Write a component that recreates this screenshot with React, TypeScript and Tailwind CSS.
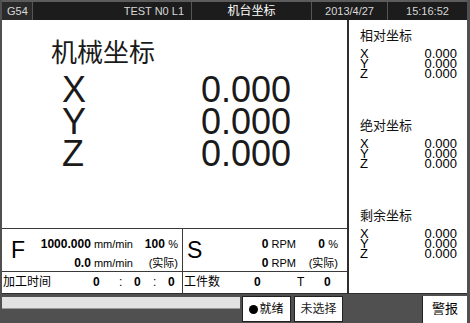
import React from 'react'

const latin = "font-['Liberation_Sans','Noto_Sans_CJK_SC',sans-serif]"

const axes = ['X', 'Y', 'Z']

function SideBlock({ title }: { title: string }) {
  return (
    <div className="h-[90px]">
      <div className="text-[13px] leading-[16px] text-[#111]">{title}</div>
      <div className="mt-[5px] text-[13px] leading-[10px] text-black">
        {axes.map((a) => (
          <div key={a} className="h-[10px] flex justify-between">
            <span>{a}</span>
            <span>0.000</span>
          </div>
        ))}
      </div>
    </div>
  )
}

export default function App() {
  return (
    <div className={`w-[470px] h-[323px] bg-[#505050] flex flex-col overflow-hidden pl-[2px] pr-[3px] ${latin}`}>
      {/* Top bar */}
      <div className="h-[20px] flex bg-[#1c1c1c] border-t-2 border-[#5c5c5c] text-[11px] leading-[18px] text-[#d8d8d8]">
        <div className="w-[31px] bg-[#2a2a2a] pl-[5px] border-r border-[#555]">G54</div>
        <div className="w-[159px] text-right pr-[7px] border-r border-[#555]">TEST N0 L1</div>
        <div className="w-[120px] text-center text-[12px] text-white border-r border-[#555]">机台坐标</div>
        <div className="w-[76px] text-center border-r border-[#555]">2013/4/27</div>
        <div className="flex-1 text-center">15:16:52</div>
      </div>

      {/* Main */}
      <div className="h-[273px] flex">
        <div className="w-[345px] flex flex-col">
          <div className="h-[209px] bg-white border-b border-[#3a3a3a] pt-[18px] pl-[49px]">
            <div className="text-[26px] leading-[30px] text-[#1a1a1a]">机械坐标</div>
            <div className="mt-[6px] ml-[11px] w-[229px] text-[36px] leading-[32px] text-[#1a1a1a]">
              {axes.map((a) => (
                <div key={a} className="flex justify-between">
                  <span>{a}</span>
                  <span>0.000</span>
                </div>
              ))}
            </div>
          </div>

          <div className="h-[43px] flex bg-white border-b border-[#3a3a3a]">
            <div className="w-[181px] flex border-r border-[#3a3a3a]">
              <div className="w-[36px] pl-[9px] pt-[8px] text-[23px] leading-[26px]">F</div>
              <div className="flex-1 grid grid-cols-[95px_45px] pt-[6px] text-[12px] leading-[19px] text-right">
                <div className="font-bold">1000.000<span className="font-normal text-[11px]"> mm/min</span></div>
                <div className="font-bold">100 <span className="font-normal text-[11px]">%</span></div>
                <div className="font-bold">0.0<span className="font-normal text-[11px]"> mm/min</span></div>
                <div className="text-[11px]">(实际)</div>
              </div>
            </div>
            <div className="flex-1 flex">
              <div className="w-[40px] pl-[4px] pt-[8px] text-[23px] leading-[26px]">S</div>
              <div className="flex-1 grid grid-cols-[73px_42px] pt-[6px] text-[12px] leading-[19px] text-right">
                <div className="font-bold">0<span className="font-normal text-[11px]"> RPM</span></div>
                <div className="font-bold">0 <span className="font-normal text-[11px]">%</span></div>
                <div className="font-bold">0<span className="font-normal text-[11px]"> RPM</span></div>
                <div className="text-[11px]">(实际)</div>
              </div>
            </div>
          </div>

          <div className="h-[21px] flex bg-white text-[12px] leading-[20px]">
            <div className="w-[181px] flex border-r border-[#3a3a3a] pl-[1px]">
              <span className="w-[90px]">加工时间</span>
              <span className="font-bold w-[26px]">0</span>
              <span className="w-[15px]">:</span>
              <span className="font-bold w-[19px]">0</span>
              <span className="w-[15px]">:</span>
              <span className="font-bold">0</span>
            </div>
            <div className="flex-1 flex pl-[1px]">
              <span className="w-[70px]">工件数</span>
              <span className="font-bold w-[43px]">0</span>
              <span className="w-[27px]">T</span>
              <span className="font-bold">0</span>
            </div>
          </div>
        </div>

        <div className="flex-1 bg-white border-l-2 border-[#2e2e2e] pt-[8px] pl-[11px] pr-[10px]">
          <SideBlock title="相对坐标" />
          <SideBlock title="绝对坐标" />
          <SideBlock title="剩余坐标" />
        </div>
      </div>

      {/* Bottom */}
      <div className="h-[30px] flex border-t border-[#2e2e2e] text-[12px] leading-[24px]">
        <div className="w-[238px]">
          <div className="mt-[3px] h-[12px] bg-[#e2e2e2] border-b border-[#9a9a9a]" />
        </div>
        <div className="ml-[2px] mt-[2px] w-[49px] h-[26px] bg-white border border-[#222] flex items-center justify-center gap-[1px]">
          <span className="w-[9px] h-[9px] rounded-full bg-black" />
          <span>就绪</span>
        </div>
        <div className="ml-[3px] mt-[2px] w-[49px] h-[26px] bg-white border border-[#222] text-center text-[#222]">未选择</div>
        <div className="flex-1" />
        <div className="mt-[2px] w-[45px] h-[28px] bg-white border-l border-[#222] text-center text-[13px] leading-[26px]">警报</div>
      </div>
    </div>
  )
}
